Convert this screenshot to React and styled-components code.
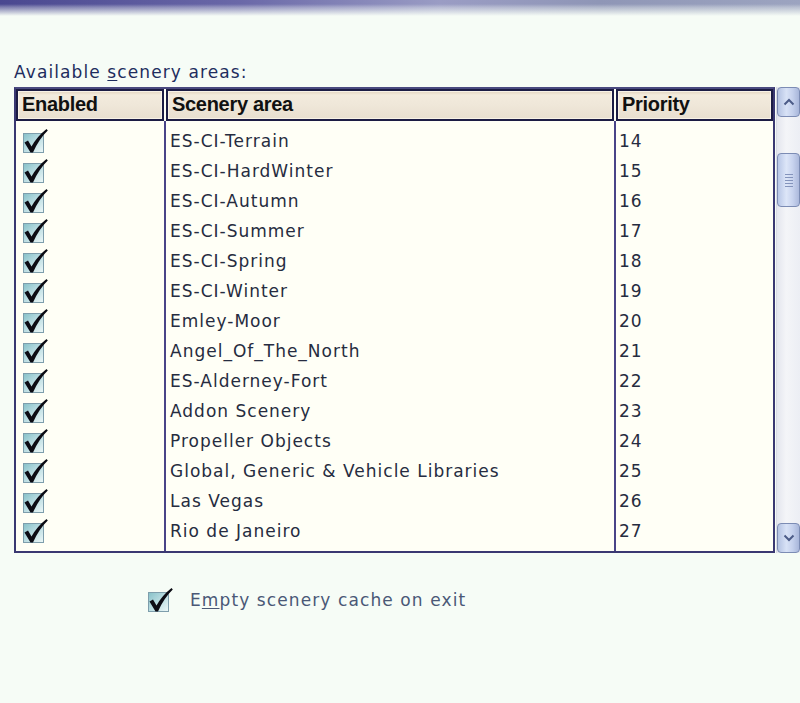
import React from "react";
import styled, { createGlobalStyle } from "styled-components";

const Global = createGlobalStyle`
  html, body { margin: 0; padding: 0; background: #f6fcf6; }
  body { width: 800px; height: 703px; overflow: hidden; font-family: "DejaVu Sans", Verdana, sans-serif; }
`;

const Page = styled.div`
  width: 800px;
  height: 703px;
  background: #f6fcf6;
  display: flex;
  flex-direction: column;
`;

const TopBar = styled.div`
  height: 16px;
  background:
    linear-gradient(to bottom, rgba(246,252,246,0) 0px, rgba(246,252,246,0) 4px, rgba(246,252,246,0.3) 7px, rgba(246,252,246,1) 16px),
    linear-gradient(to right, #4a4890 0%, #6a68a8 30%, #9a9cc4 55%, #8f96b6 75%, #9ca4c0 100%);
`;

const Content = styled.div`
  padding: 45px 0 0 14px;
  display: flex;
  flex-direction: column;
`;

const Label = styled.div`
  font-size: 17px;
  color: #1e2d5e;
  letter-spacing: 1.1px;
  height: 22px;
  line-height: 22px;
  u { text-decoration: underline; text-underline-offset: 2px; }
`;

const Frame = styled.div`
  display: flex;
  margin-top: 4px;
  height: 466px;
`;

const ListBox = styled.div`
  width: 758px;
  border: 2px solid #3a3872;
  border-top-color: #4a4a80;
  background: #fffff6;
  display: flex;
  flex-direction: column;
`;

const cols = "150px 450px 1fr";

const HeaderRow = styled.div`
  display: grid;
  grid-template-columns: ${cols};
  height: 32px;
  background: #fffff6;
`;

const HeaderCell = styled.div`
  border: 2px solid #1c1c44;
  margin-right: ${(p) => (p.$last ? "0" : "2px")};
  background: linear-gradient(to bottom, #e2d3bd 0px, #f3ebdd 4px, #efe7d9 50%, #e8dfcf 100%);
  box-shadow: inset 0 0 0 1px #f8f2e6;
  font-family: "Liberation Sans", Arial, sans-serif;
  font-weight: bold;
  font-size: 20px;
  letter-spacing: -0.3px;
  color: #111;
  display: flex;
  align-items: center;
  padding-left: 4px;
  padding-bottom: 1px;
`;

const Body = styled.div`
  flex: 1;
  display: grid;
  grid-template-columns: ${cols};
  grid-auto-rows: 30px;
  padding-top: 5px;
  position: relative;
`;

const Cell = styled.div`
  display: flex;
  align-items: center;
  padding-left: ${(p) => p.$pad || 4}px;
  font-size: 17px;
  letter-spacing: 1px;
  color: #262c40;
  white-space: nowrap;
`;

const Dividers = styled.div`
  position: absolute;
  inset: 0;
  display: grid;
  grid-template-columns: ${cols};
  pointer-events: none;
  & > div:nth-child(1), & > div:nth-child(2) {
    border-right: 2px solid #4a4488;
  }
`;

const Scroll = styled.div`
  width: 23px;
  margin-left: 1px;
  display: flex;
  flex-direction: column;
  background: linear-gradient(to right, #e4e6ee, #f4f5f8 40%, #eceef4);
  border-left: 1px solid #d8dae6;
`;

const ArrowBtn = styled.div`
  height: 28px;
  border: 1px solid #7c8cb4;
  border-radius: 4px;
  background: linear-gradient(to right, #b4c2e2, #d8e2f6 40%, #c4d0ec 70%, #a8b6da);
  display: flex;
  align-items: center;
  justify-content: center;
`;

const Gap = styled.div`
  height: ${(p) => p.$h}px;
  flex: ${(p) => (p.$grow ? 1 : "none")};
`;

const Thumb = styled.div`
  height: 52px;
  border: 1px solid #7c8cb4;
  border-radius: 4px;
  background: linear-gradient(to right, #b8c6e6, #dde6f8 40%, #c8d3ee 70%, #acb9dc);
  display: flex;
  flex-direction: column;
  align-items: center;
  justify-content: center;
  gap: 2px;
`;

const Grip = styled.div`
  width: 8px;
  height: 1px;
  background: #8494bc;
`;

const Bottom = styled.div`
  display: flex;
  align-items: center;
  margin-top: 34px;
  margin-left: 133px;
  gap: 17px;
`;

const BottomText = styled.span`
  font-size: 17px;
  letter-spacing: 1.1px;
  color: #4a5876;
  u { text-decoration: underline; text-underline-offset: 2px; }
`;

const Check = ({ size = 26 }) => (
  <svg width={size} height={size} viewBox="0 0 26 26">
    <defs>
      <linearGradient id="cbg" x1="0" y1="0" x2="1" y2="1">
        <stop offset="0" stopColor="#86c0c8" />
        <stop offset="0.55" stopColor="#c0e0e4" />
        <stop offset="1" stopColor="#eef8f8" />
      </linearGradient>
    </defs>
    <rect x="1.5" y="5.5" width="20" height="19" fill="url(#cbg)" stroke="#7e9eac" strokeWidth="1" />
    <path d="M2.5 14.5 L6 12.5 L9.5 18.5 Q15 8.5 24.5 1 L25.8 2.6 Q17 11 11 24.5 L8.5 24.5 Z" fill="#0c0c14" />
  </svg>
);

const Chevron = ({ down }) => (
  <svg width="12" height="8" viewBox="0 0 12 8">
    <path
      d={down ? "M1.5 1.5 L6 6 L10.5 1.5" : "M1.5 6.5 L6 2 L10.5 6.5"}
      fill="none"
      stroke="#4c5c88"
      strokeWidth="2"
    />
  </svg>
);

const rows = [
  ["ES-CI-Terrain", 14],
  ["ES-CI-HardWinter", 15],
  ["ES-CI-Autumn", 16],
  ["ES-CI-Summer", 17],
  ["ES-CI-Spring", 18],
  ["ES-CI-Winter", 19],
  ["Emley-Moor", 20],
  ["Angel_Of_The_North", 21],
  ["ES-Alderney-Fort", 22],
  ["Addon Scenery", 23],
  ["Propeller Objects", 24],
  ["Global, Generic & Vehicle Libraries", 25],
  ["Las Vegas", 26],
  ["Rio de Janeiro", 27],
];

export default function App() {
  return (
    <Page>
      <Global />
      <TopBar />
      <Content>
        <Label>
          Available <u>s</u>cenery areas:
        </Label>
        <Frame>
          <ListBox>
            <HeaderRow>
              <HeaderCell>Enabled</HeaderCell>
              <HeaderCell>Scenery area</HeaderCell>
              <HeaderCell $last>Priority</HeaderCell>
            </HeaderRow>
            <Body>
              <Dividers>
                <div />
                <div />
                <div />
              </Dividers>
              {rows.map(([name, pr]) => (
                <React.Fragment key={name}>
                  <Cell $pad={6}>
                    <Check />
                  </Cell>
                  <Cell $pad={4}>{name}</Cell>
                  <Cell $pad={3}>{pr}</Cell>
                </React.Fragment>
              ))}
            </Body>
          </ListBox>
          <Scroll>
            <ArrowBtn>
              <Chevron />
            </ArrowBtn>
            <Gap $h={36} />
            <Thumb>
              <Grip />
              <Grip />
              <Grip />
              <Grip />
              <Grip />
            </Thumb>
            <Gap $grow />
            <ArrowBtn>
              <Chevron down />
            </ArrowBtn>
          </Scroll>
        </Frame>
        <Bottom>
          <Check />
          <BottomText>
            E<u>m</u>pty scenery cache on exit
          </BottomText>
        </Bottom>
      </Content>
    </Page>
  );
}
